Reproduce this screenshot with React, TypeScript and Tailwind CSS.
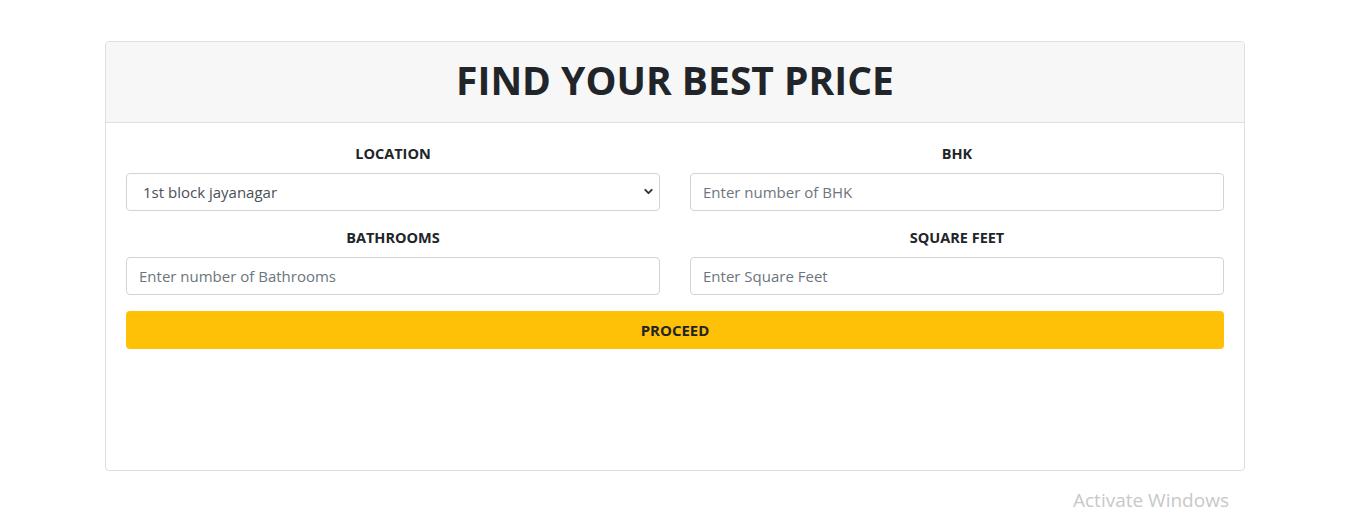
import { ChevronDown } from 'lucide-react'

const font = { fontFamily: '"Open Sans", "Noto Sans", sans-serif' }

function Field({ label, placeholder }: { label: string; placeholder: string }) {
  return (
    <div className="flex flex-col">
      <label className="text-center text-[14.5px] font-bold text-[#212529] leading-[20px] mb-[9px]">{label}</label>
      <input
        placeholder={placeholder}
        className="h-[38px] w-full rounded-[4px] border border-[#ced4da] bg-white px-[12px] text-[15px] text-[#495057] placeholder:text-[#6c757d] outline-none"
      />
    </div>
  )
}

export default function App() {
  return (
    <div className="relative min-h-[517px] bg-white" style={font}>
      <div className="pt-[41px] ml-[105px] w-[1140px]">
        <div className="h-[430px] rounded-[4px] border border-[#dfdfdf] bg-white">
          <div className="h-[81px] pb-[6px] flex items-center justify-center bg-[#f7f7f7] border-b border-[#dfdfdf] rounded-t-[4px]">
            <h1 className="text-[39px] font-bold text-[#212529] leading-none">FIND YOUR BEST PRICE</h1>
          </div>
          <div className="px-[20px] pt-[21px]">
            <div className="grid grid-cols-2 gap-x-[30px] gap-y-[17px]">
              <div className="flex flex-col">
                <label className="text-center text-[14.5px] font-bold text-[#212529] leading-[20px] mb-[9px]">LOCATION</label>
                <div className="relative">
                  <select className="h-[38px] w-full appearance-none rounded-[4px] border border-[#ced4da] bg-white pl-[16px] text-[15px] text-[#495057] outline-none">
                    <option>1st block jayanagar</option>
                  </select>
                  <ChevronDown className="absolute right-[5px] top-[12px] w-[13px] h-[13px] text-[#333]" strokeWidth={3.5} />
                </div>
              </div>
              <Field label="BHK" placeholder="Enter number of BHK" />
              <Field label="BATHROOMS" placeholder="Enter number of Bathrooms" />
              <Field label="SQUARE FEET" placeholder="Enter Square Feet" />
            </div>
            <button className="mt-[16px] h-[38px] w-full rounded-[4px] bg-[#ffc107] text-[15px] font-bold text-[#212529]">
              PROCEED
            </button>
          </div>
        </div>
      </div>
      <div className="absolute left-[1073px] top-[486px] text-[19px] text-[#c8c8c8]">Activate Windows</div>
    </div>
  )
}
